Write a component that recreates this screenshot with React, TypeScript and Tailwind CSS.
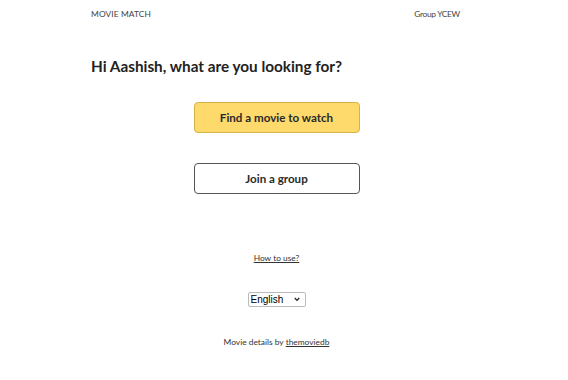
import React from "react";

export default function App() {
  return (
    <div className="w-[568px] h-[380px] bg-white text-[#222] overflow-hidden" style={{ fontFamily: "Lato, 'Noto Sans', sans-serif" }}>
      <div className="ml-[91px] w-[369px] flex flex-col">
        <div className="flex justify-between items-center h-[29px] text-[#444]">
          <span className="text-[8.4px] tracking-[0.1px]">MOVIE MATCH</span>
          <span className="text-[8.4px] tracking-[-0.3px]">Group YCEW</span>
        </div>
        <h1 className="mt-[26px] text-[15.3px] leading-[22px] font-bold text-[#222]">Hi Aashish, what are you looking for?</h1>
        <div className="flex flex-col items-center mt-[25px] pl-[2px]">
          <button className="w-[166px] h-[31px] rounded-[4px] bg-[#fed96b] border border-[#d4b245] text-[11.6px] font-bold text-[#2a2a2a]">Find a movie to watch</button>
          <button className="mt-[30px] w-[166px] h-[31px] rounded-[4px] bg-white border border-[#555] text-[11.6px] font-bold text-[#2a2a2a]">Join a group</button>
          <a className="mt-[58px] text-[8.4px] leading-[12px] underline text-[#333]" href="#">How to use?</a>
          <div className="relative mt-[28px] w-[58px] h-[15px]">
            <select className="block appearance-none w-full h-full border border-[#bbb] rounded-[2px] bg-white pl-[2px] py-0 text-[10px] leading-[13px] text-black" style={{ fontFamily: "'Liberation Sans', Arial, sans-serif" }} defaultValue="English">
              <option>English</option>
            </select>
            <svg className="absolute right-[6px] top-[5px] pointer-events-none" width="6" height="5" viewBox="0 0 6 5">
              <path d="M0.8 1 L3 3.4 L5.2 1" fill="none" stroke="#222" strokeWidth="1.3" />
            </svg>
          </div>
          <p className="mt-[29px] text-[8.4px] leading-[12px] text-[#333]">Movie details by <a className="underline" href="#">themoviedb</a></p>
        </div>
      </div>
    </div>
  );
}
